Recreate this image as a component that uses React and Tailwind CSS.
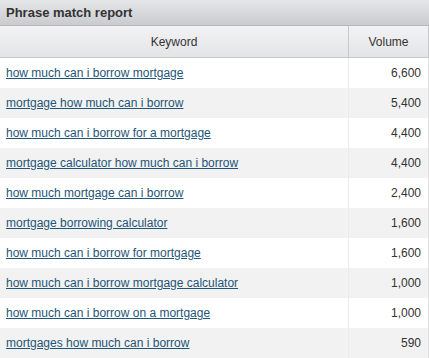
const rows = [
  ["how much can i borrow mortgage", "6,600"],
  ["mortgage how much can i borrow", "5,400"],
  ["how much can i borrow for a mortgage", "4,400"],
  ["mortgage calculator how much can i borrow", "4,400"],
  ["how much mortgage can i borrow", "2,400"],
  ["mortgage borrowing calculator", "1,600"],
  ["how much can i borrow for mortgage", "1,600"],
  ["how much can i borrow mortgage calculator", "1,000"],
  ["how much can i borrow on a mortgage", "1,000"],
  ["mortgages how much can i borrow", "590"],
];

export default function App() {
  return (
    <div className="w-[429px] h-[358px] overflow-hidden bg-white font-['Liberation_Sans',Arial,sans-serif] text-[12px] text-[#333]">
      <div className="h-[26px] flex items-center pl-[6px] bg-gradient-to-b from-[#e6e7e9] to-[#c9cbce] border-b border-[#b9bbbe]">
        <span className="font-bold text-[13px] text-[#333]">Phrase match report</span>
      </div>
      <div className="flex h-[32px] bg-gradient-to-b from-[#f3f3f5] to-[#e3e4e6] border-b border-[#c8c9cc] shadow-[0_1px_2px_rgba(0,0,0,0.12)] border-r border-r-[#c8c9cc]">
        <div className="flex-1 flex items-center justify-center text-[#333]">Keyword</div>
        <div className="w-[80px] flex items-center justify-center border-l border-[#c8c9cc] text-[#333]">Volume</div>
      </div>
      {rows.map(([kw, vol], i) => (
        <div
          key={kw}
          className={`flex h-[30px] border-r border-[#e0e0e0] ${i % 2 === 0 ? "bg-white" : "bg-[#f2f2f2]"}`}
        >
          <div className="flex-1 flex items-center pl-[6px]">
            <a href="#" className="text-[#1f5578] underline">{kw}</a>
          </div>
          <div className="w-[80px] flex items-center justify-end pr-[7px] border-l border-[#ebebeb] text-[#333]">
            {vol}
          </div>
        </div>
      ))}
    </div>
  );
}
